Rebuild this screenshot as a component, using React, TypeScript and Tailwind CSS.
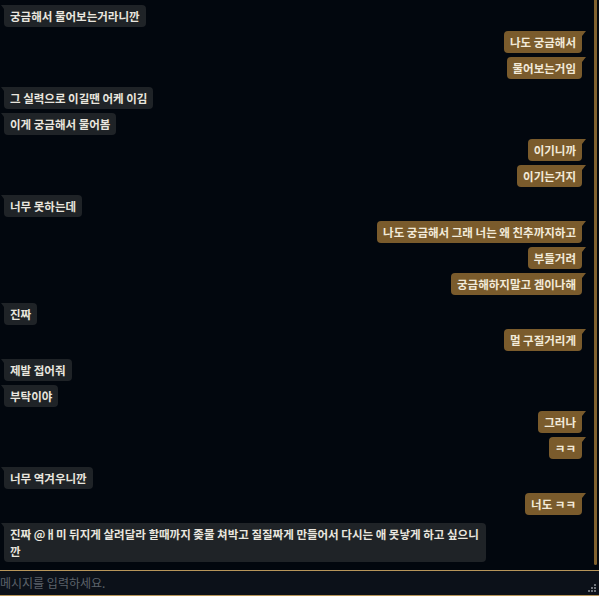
import React from "react";

type Msg = { side: "L" | "R"; text: string };

const messages: Msg[] = [
  { side: "L", text: "궁금해서 물어보는거라니깐" },
  { side: "R", text: "나도 궁금해서" },
  { side: "R", text: "물어보는거임" },
  { side: "L", text: "그 실력으로 이길땐 어케 이김" },
  { side: "L", text: "이게 궁금해서 물어봄" },
  { side: "R", text: "이기니까" },
  { side: "R", text: "이기는거지" },
  { side: "L", text: "너무 못하는데" },
  { side: "R", text: "나도 궁금해서 그래 너는 왜 친추까지하고" },
  { side: "R", text: "부들거려" },
  { side: "R", text: "궁금해하지말고 겜이나해" },
  { side: "L", text: "진짜" },
  { side: "R", text: "멀 구질거리게" },
  { side: "L", text: "제발 접어줘" },
  { side: "L", text: "부탁이야" },
  { side: "R", text: "그러나" },
  { side: "R", text: "ㅋㅋ" },
  { side: "L", text: "너무 역겨우니깐" },
  { side: "R", text: "너도 ㅋㅋ" },
  {
    side: "L",
    text: "진짜 @ㅐ미 뒤지게 살려달라 할때까지 좆물 쳐박고 질질짜게 만들어서 다시는 애 못낳게 하고 싶으니깐",
  },
];

function Bubble({ msg, prev }: { msg: Msg; prev?: Msg }) {
  const gap = !prev ? "mt-0" : prev.side === "R" && msg.side === "L" ? "mt-2" : "mt-1";

  if (msg.side === "R") {
    return (
      <div className={`flex justify-end ${gap}`}>
        <div className="relative max-w-[482px] rounded-[4px] rounded-tr-none bg-[#7a5b2c] px-[6px] py-[2.5px] text-[#f2ead9]">
          {msg.text}
          <span className="absolute right-[-4px] top-0 h-0 w-0 border-t-[5px] border-r-[4px] border-t-[#7a5b2c] border-r-transparent" />
        </div>
      </div>
    );
  }

  return (
    <div className={`flex justify-start ${gap}`}>
      <div className="relative max-w-[482px] rounded-[4px] rounded-tl-none bg-[#1f2327] px-[6px] py-[2.5px] text-[#e9e6df]">
        {msg.text}
        <span className="absolute left-[-3px] top-0 h-0 w-0 border-t-[4px] border-l-[3px] border-t-[#1f2327] border-l-transparent" />
      </div>
    </div>
  );
}

export default function App() {
  return (
    <div
      className="flex h-[596px] w-[599px] flex-col overflow-hidden bg-[#02070e]"
      style={{ fontFamily: '"Noto Sans CJK KR", "Noto Sans", sans-serif' }}
    >
      <div className="flex min-h-0 flex-1">
        {/* message list */}
        <div className="flex flex-1 flex-col pl-1 pr-2 pt-[5px] text-[11.5px] font-bold leading-[17px]">
          {messages.map((m, i) => (
            <Bubble key={i} msg={m} prev={messages[i - 1]} />
          ))}
        </div>
        {/* scroll thumb */}
        <div className="flex w-[9px] pb-[5px] pl-[4px]">
          <div className="w-[3px] rounded-b-[2px] bg-[#82622f]" />
        </div>
      </div>

      {/* input */}
      <div className="relative h-[26px] border-y border-[#b8965a] bg-[#0c1119]">
        <textarea
          className="block h-full w-full resize-none bg-transparent px-0 pt-[3px] text-[12px] leading-[17px] text-[#c9ccd1] outline-none placeholder:text-[#5d636b]"
          placeholder="메시지를 입력하세요."
        />
        <svg className="pointer-events-none absolute bottom-[2px] right-[2px]" width="9" height="9" viewBox="0 0 9 9">
          <rect x="6" y="0" width="2" height="2" fill="#6f747b" />
          <rect x="3" y="3" width="2" height="2" fill="#6f747b" />
          <rect x="6" y="3" width="2" height="2" fill="#6f747b" />
          <rect x="0" y="6" width="2" height="2" fill="#6f747b" />
          <rect x="3" y="6" width="2" height="2" fill="#6f747b" />
          <rect x="6" y="6" width="2" height="2" fill="#6f747b" />
        </svg>
      </div>
    </div>
  );
}
